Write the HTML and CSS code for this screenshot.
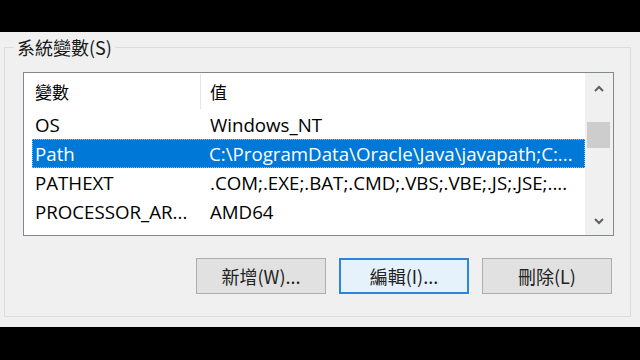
FILE: index.html
```html
<!DOCTYPE html>
<html lang="zh-Hant">
<head>
    <meta charset="UTF-8">
    <title>系統變數</title>
    <link rel="stylesheet" href="styles.css">
</head>
<body>
    <div class="screen">
        <div class="group">
            <span class="group-title">系統變數(S)</span>

            <div class="listbox">
                <div class="list">
                    <div class="list-header">
                        <div class="col-name">變數</div>
                        <div class="col-value">值</div>
                    </div>
                    <div class="row">
                        <div class="cell-name">OS</div>
                        <div class="cell-value">Windows_NT</div>
                    </div>
                    <div class="row selected">
                        <div class="cell-name">Path</div>
                        <div class="cell-value">C:\ProgramData\Oracle\Java\javapath;C:...</div>
                    </div>
                    <div class="row">
                        <div class="cell-name">PATHEXT</div>
                        <div class="cell-value">.COM;.EXE;.BAT;.CMD;.VBS;.VBE;.JS;.JSE;....</div>
                    </div>
                    <div class="row">
                        <div class="cell-name">PROCESSOR_AR...</div>
                        <div class="cell-value">AMD64</div>
                    </div>
                    <div class="row row-partial">
                        <div class="cell-name">PROCESSOR_ID...</div>
                        <div class="cell-value">Intel64 Family 6 Model 158 Stepping 9, GenuineIntel</div>
                    </div>
                </div>
                <div class="scrollbar">
                    <div class="sb-btn">
                        <svg width="10" height="7" viewBox="0 0 10 7"><polyline points="1,6 5,2 9,6" fill="none" stroke="#606060" stroke-width="2"/></svg>
                    </div>
                    <div class="sb-thumb"></div>
                    <div class="sb-btn sb-down">
                        <svg width="10" height="7" viewBox="0 0 10 7"><polyline points="1,1 5,5 9,1" fill="none" stroke="#606060" stroke-width="2"/></svg>
                    </div>
                </div>
            </div>

            <div class="buttons">
                <button class="btn">新增(W)...</button>
                <button class="btn btn-default">編輯(I)...</button>
                <button class="btn">刪除(L)</button>
            </div>
        </div>
    </div>
</body>
</html>
```

FILE: styles.css
```css
body {
    margin: 0;
    background-color: #000;
    font-family: "Open Sans", "Noto Sans CJK TC", sans-serif;
    color: #000;
}

.screen {
    margin-top: 32px;
    height: 295px;
    background-color: #f0f0f0;
    padding: 15px 0 0 4px;
    box-sizing: border-box;
}

.group {
    position: relative;
    width: 627px;
    height: 270px;
    border: 1px solid #dcdcdc;
    box-sizing: border-box;
    padding: 24px 0 0 18px;
}

.group-title {
    position: absolute;
    top: -11px;
    left: 9px;
    padding: 0 3px;
    background-color: #f0f0f0;
    font-family: "Noto Sans CJK TC", sans-serif;
    font-size: 18px;
    line-height: 20px;
    color: #1a1a1a;
}

.listbox {
    display: flex;
    width: 591px;
    height: 164px;
    border: 1px solid #828790;
    box-sizing: border-box;
    background-color: #fff;
    overflow: hidden;
}

.list {
    flex: 1;
    overflow: hidden;
}

.list-header {
    display: flex;
    height: 37px;
    align-items: center;
    font-family: "Noto Sans CJK TC", sans-serif;
    font-size: 17px;
}

.col-name {
    width: 165px;
    padding-left: 11px;
    border-right: 1px solid #e5e5e5;
    line-height: 35px;
}

.col-value {
    padding-left: 9px;
}

.row {
    display: flex;
    height: 29px;
    align-items: center;
    margin-left: 8px;
    font-size: 18.7px;
    white-space: nowrap;
    box-sizing: border-box;
}

.row.selected {
    background-color: #0078d7;
    color: #fff;
    border: 1px dotted #8cc4f0;
}

/* only the tops of this row peek out under the list */
.row-partial {
    padding-top: 3px;
}

.cell-name {
    width: 165px;
    padding-left: 3px;
    flex-shrink: 0;
}

.row.selected .cell-name {
    width: 164px;
    padding-left: 2px;
}

.cell-value {
    padding-left: 10px;
}

.scrollbar {
    display: flex;
    flex-direction: column;
    width: 28px;
    background-color: #f0f0f0;
}

.sb-btn {
    display: flex;
    height: 30px;
    align-items: center;
    justify-content: center;
}

.sb-down {
    height: 28px;
    margin-top: auto;
}

.sb-thumb {
    height: 26px;
    margin: 19px 3px 0 2px;
    background-color: #cdcdcd;
}

.buttons {
    display: flex;
    width: 591px;
    justify-content: flex-end;
    gap: 13px;
    margin-top: 22px;
    padding-right: 2px;
    box-sizing: border-box;
}

.btn {
    width: 130px;
    height: 36px;
    background-color: #e1e1e1;
    border: 1px solid #adadad;
    font-family: "Noto Sans CJK TC", sans-serif;
    font-size: 18px;
    color: #222;
    padding: 0;
}

.btn-default {
    background-color: #e5f1fb;
    border: 2px solid #2a86dd;
}
```
